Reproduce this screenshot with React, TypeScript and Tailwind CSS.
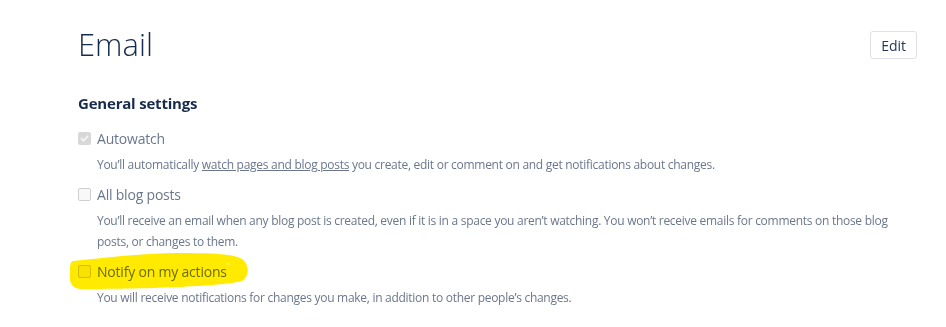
import React from "react";

const font = { fontFamily: '"Open Sans", "Noto Sans", sans-serif' };

function Box({ checked }: { checked?: boolean }) {
  if (checked) {
    return (
      <span className="flex h-[13px] w-[13px] shrink-0 items-center justify-center rounded-[2px] bg-[#d8d8d8]">
        <svg viewBox="0 0 12 12" className="h-[11px] w-[11px]">
          <path d="M2.5 6.2 L5 8.6 L9.6 3.4" fill="none" stroke="#f4f4f4" strokeWidth="1.8" strokeLinecap="round" strokeLinejoin="round" />
        </svg>
      </span>
    );
  }
  return <span className="h-[13px] w-[13px] shrink-0 rounded-[2px] border border-[#cfcfcf] bg-[#f8f8f8]" />;
}

function Row({
  label,
  checked,
  children,
}: {
  label: string;
  checked?: boolean;
  children: React.ReactNode;
}) {
  return (
    <div className="flex flex-col">
      <div className="flex h-[20px] items-center gap-[6px]">
        <Box checked={checked} />
        <span className="text-[14px] tracking-[-0.2px] text-[#6b778c]">{label}</span>
      </div>
      <div className="mt-[6px] max-w-[830px] pl-[19px] text-[12px] leading-[21px] tracking-[-0.28px] text-[#6b778c]">
        {children}
      </div>
    </div>
  );
}

export default function App() {
  return (
    <div className="relative h-[327px] w-[946px] overflow-hidden bg-white" style={font}>
      <div className="flex flex-col pl-[78px] pr-[29px] pt-[26px]">
        <div className="flex items-start justify-between">
          <h1 className="text-[31px] font-light leading-[36px] text-[#172b4d]">Email</h1>
          <button className="mt-[5px] h-[28px] rounded-[3px] border border-[#dfe1e6] bg-white px-[10px] text-[14px] text-[#253858]">
            Edit
          </button>
        </div>
        <h2 className="mt-[31px] text-[15px] font-bold leading-[20px] tracking-[-0.2px] text-[#172b4d]">
          General settings
        </h2>
        <div className="mt-[15px] flex flex-col gap-[9px]">
          <Row label="Autowatch" checked>
            You’ll automatically <span className="underline">watch pages and blog posts</span> you create, edit or
            comment on and get notifications about changes.
          </Row>
          <Row label="All blog posts">
            You’ll receive an email when any blog post is created, even if it is in a space you aren’t watching. You
            won’t receive emails for comments on those blog posts, or changes to them.
          </Row>
          <Row label="Notify on my actions">
            You will receive notifications for changes you make, in addition to other people’s changes.
          </Row>
        </div>
      </div>
      <svg className="pointer-events-none absolute left-0 top-0 mix-blend-multiply" width="946" height="327">
        <path
          d="M73 261 C110 257 150 253 180 253 C210 253 232 254 240 258 C250 263 250 276 242 281 C225 286 150 289 82 289 C70 289 69 280 70 272 C70 266 70 262 73 261 Z"
          fill="#ffea00"
        />
        <circle cx="228" cy="264" r="0.8" fill="#ffffff" />
      </svg>
    </div>
  );
}
